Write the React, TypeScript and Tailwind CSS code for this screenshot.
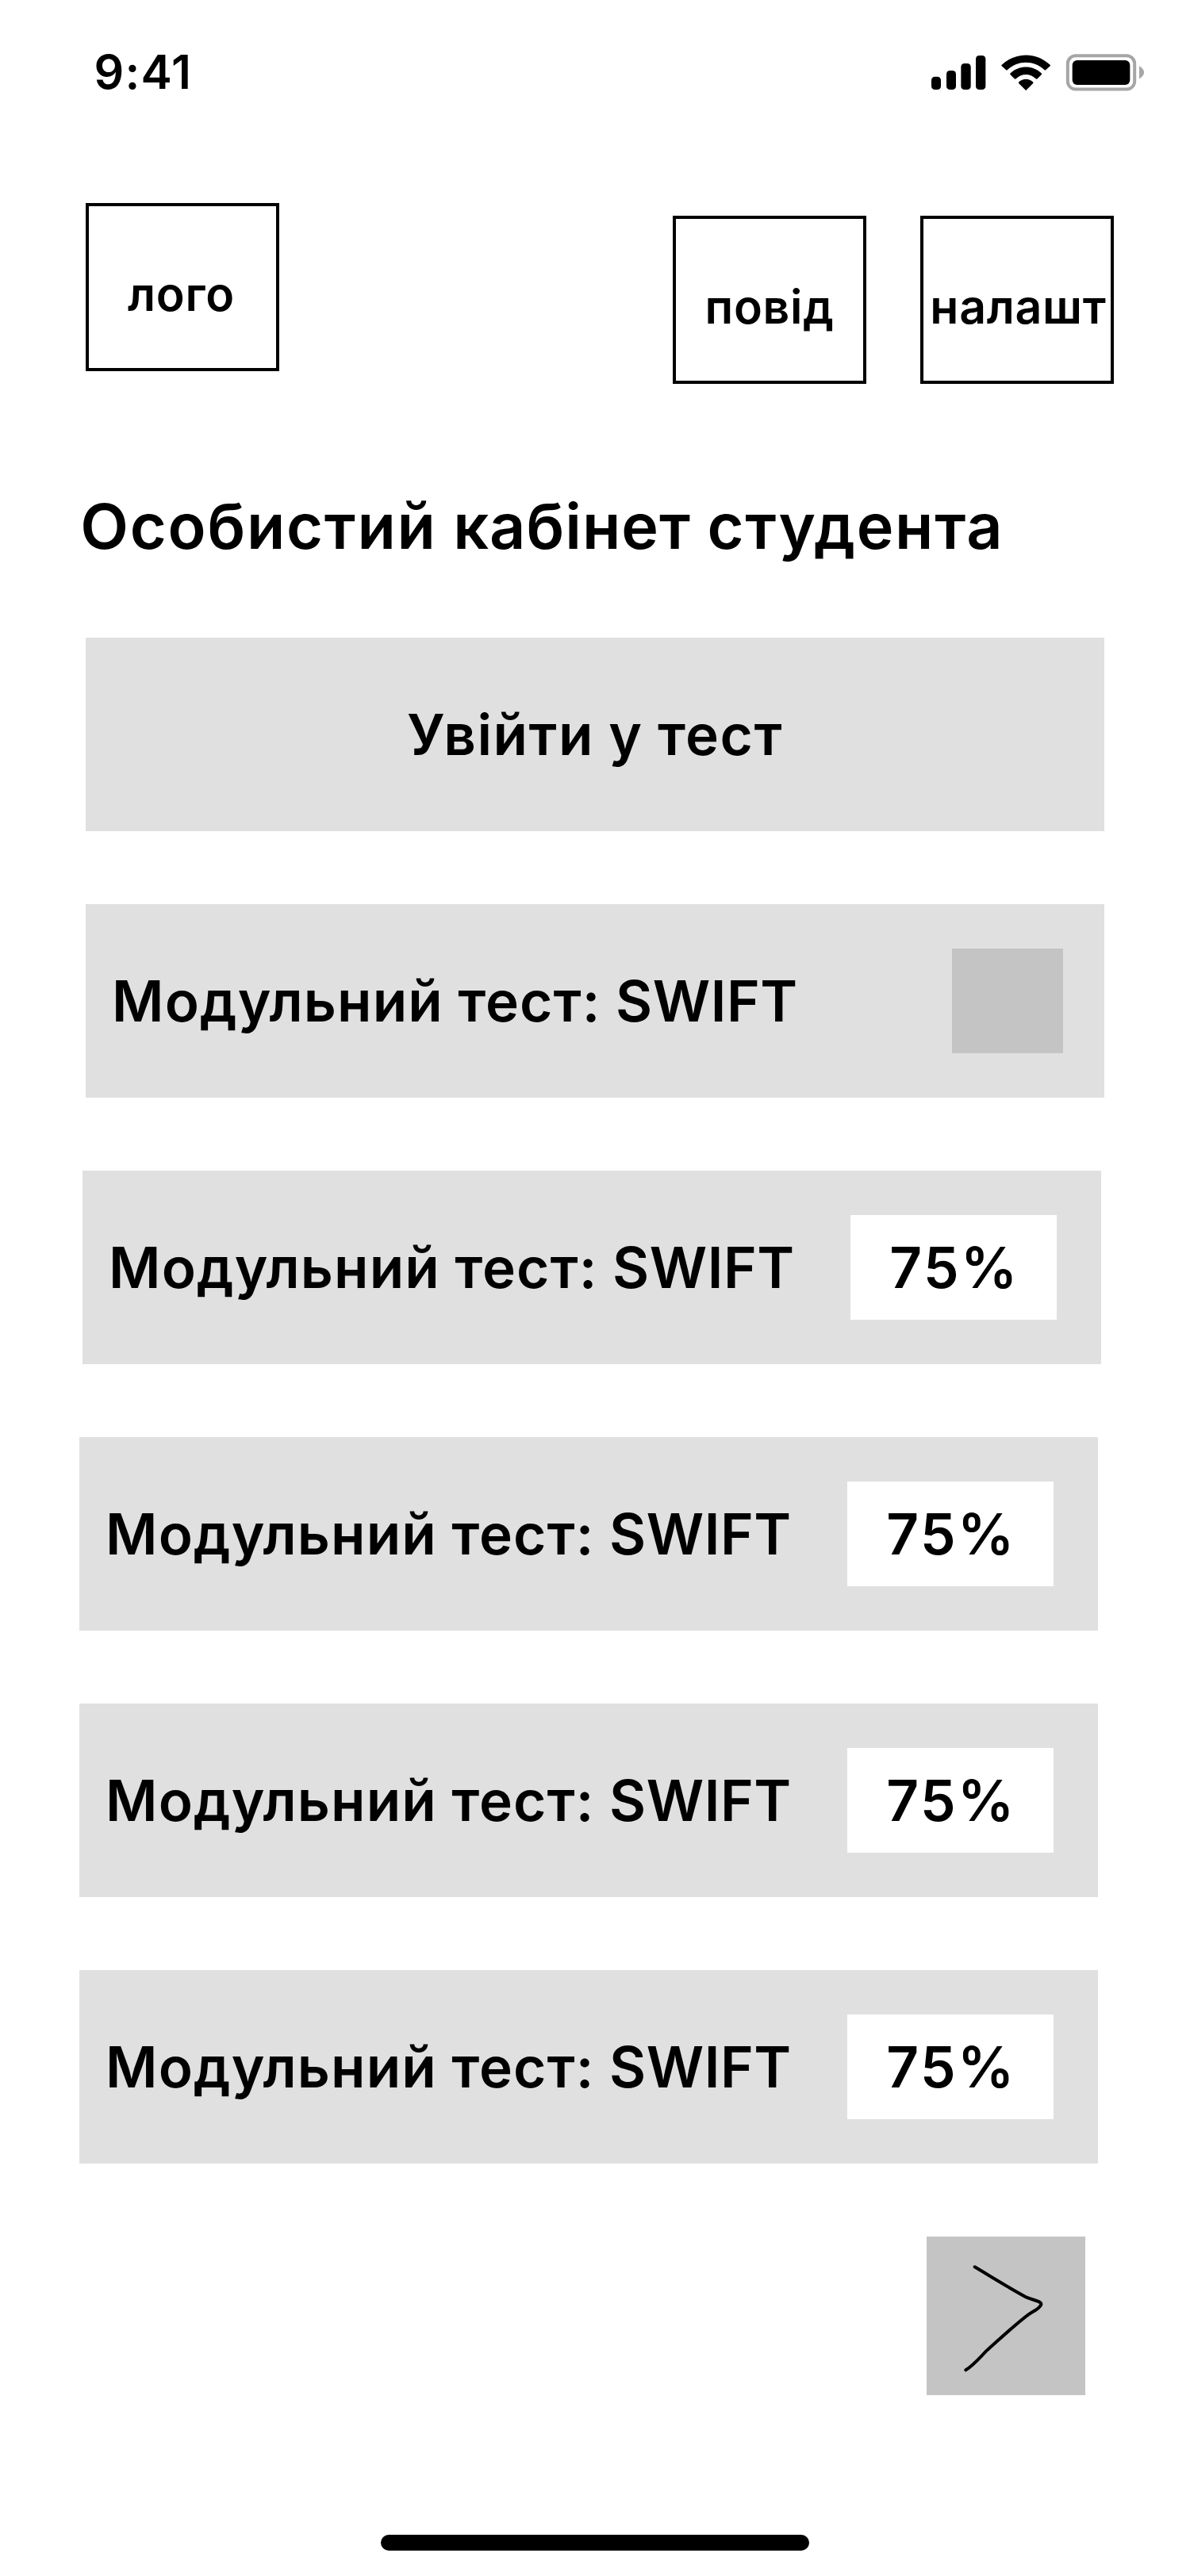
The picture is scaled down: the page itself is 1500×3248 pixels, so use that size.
function StatusIcons() {
  return (
    <svg viewBox="0 0 960 240" className="h-20 w-80" aria-hidden="true">
      <rect x="72" y="140" width="36" height="49" rx="13" />
      <rect x="129" y="117" width="36" height="72" rx="13" />
      <rect x="184" y="90" width="37" height="99" rx="13" />
      <rect x="240" y="60" width="37" height="129" rx="13" />
      <path d="M338 95 C391 46 468 46 521 95 Q523 98 521 100 L505 114 Q502 117 499 114 C459 77 400 77 360 114 Q357 117 354 114 L338 100 Q336 98 338 95 Z" />
      <path d="M371 127 C405 96 454 96 488 127 Q491 130 488 133 L473 148 Q470 150 467 148 C445 127 414 127 392 148 Q389 150 386 148 L371 133 Q368 130 371 127 Z" />
      <path d="M403 160 C418 146 441 146 456 160 Q459 163 456 166 L432 190 Q429.500 193 427 190 L403 166 Q400 163 403 160 Z" />
      <rect x="587.500" y="61" width="253" height="126.500" rx="30" fill="none" stroke="#a6a6a6" strokeWidth="12" />
      <rect x="605" y="78" width="218" height="93" rx="18" />
      <path d="M858 100 C868 105 876 114 876 124 C876 134 868 143 858 148 Z" fill="#a6a6a6" />
    </svg>
  );
}

function StatusBar() {
  return (
    <div className="flex h-64 items-start justify-between pt-[50px] pr-[30px] pl-[118.5px]">
      <span className="text-[59px] leading-[81px] font-semibold tracking-[1.2px]">9:41</span>
      <StatusIcons />
    </div>
  );
}

function HeaderBox({ label, pad }: { label: string; pad?: string }) {
  return (
    <div
      className={`flex h-[212px] w-[244px] items-center justify-center border-4 border-black pt-[16px] text-[59px] leading-none font-semibold tracking-[0.7px] whitespace-nowrap ${pad ?? ""}`}
    >
      {label}
    </div>
  );
}

const tests = [
  { offset: "ml-1", score: "75%" },
  { offset: "ml-0", score: "75%" },
  { offset: "ml-0", score: "75%" },
  { offset: "ml-0", score: "75%" },
];

function TestTitle() {
  return (
    <span className="tracking-[1.15px] [word-spacing:-0.8px] whitespace-nowrap">
      Модульний тест: <span className="tracking-[0.6px]">SWIFT</span>
    </span>
  );
}

export default function App() {
  return (
    <main className="flex h-[3248px] w-[1500px] flex-col overflow-hidden bg-white font-['Inter',sans-serif] text-black">
      <StatusBar />

      <header className="flex items-start pl-[108px]">
        <HeaderBox label="лого" pad="pr-[3px]" />
        <div className="mt-4 ml-[496px] flex gap-[68px]">
          <HeaderBox label="повід" />
          <HeaderBox label="налашт" pad="pl-[3px]" />
        </div>
      </header>

      <h1 className="mt-32 pl-[101.3px] text-[79px] leading-[102px] font-semibold tracking-[1.75px] [word-spacing:-1.2px] whitespace-nowrap">
        Особистий <span className="tracking-[1px]">кабінет</span> студента
      </h1>

      <section className="mt-[90px] flex flex-col items-start gap-[92px] pl-[100px] text-[71px] leading-none font-semibold">
        <button className="ml-2 flex h-[244px] w-[1284px] items-center justify-center bg-[#e0e0e0] tracking-[1.5px] [word-spacing:-1px]">
          Увійти у тест
        </button>
        <div className="ml-2 flex h-[244px] w-[1284px] items-center justify-between bg-[#e0e0e0] pr-[52px] pl-[33px]">
          <TestTitle />
          <span className="h-[132px] w-[140px] bg-[#c4c4c4]" />
        </div>
        {tests.map((test, i) => (
          <div
            key={i}
            className={`flex h-[244px] w-[1284px] items-center justify-between bg-[#e0e0e0] pr-14 pl-[33px] ${test.offset}`}
          >
            <TestTitle />
            <span className="flex h-[132px] w-[260px] items-center justify-center bg-white pl-[2px] tracking-[2.4px]">
              {test.score}
            </span>
          </div>
        ))}
      </section>

      <button className="mt-[92px] ml-[1168px] size-[200px] bg-[#c4c4c4]" aria-label="Далі">
        <svg viewBox="84 90 600 600" className="size-full" fill="none" stroke="black" strokeWidth="12" strokeLinecap="round" strokeLinejoin="round">
          <path d="M266 205 C330 243 400 287 462 320 C480 328 500 331 513 339 C521 344 516 351 508 359 C497 369 480 377 465 388 C415 426 360 478 315 518 C290 542 262 577 232 595" />
        </svg>
      </button>

      <div className="mt-44 h-5 w-[540px] self-center rounded-[10px] bg-black" />
    </main>
  );
}
